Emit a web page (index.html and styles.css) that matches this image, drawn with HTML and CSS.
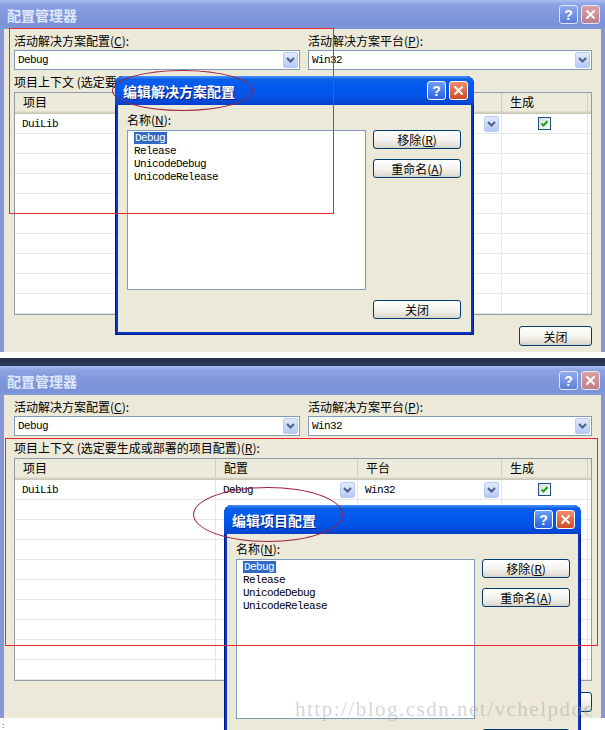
FILE: index.html
```html
<!DOCTYPE html>
<html lang="zh-CN">
<head>
    <meta charset="UTF-8">
    <title>配置管理器</title>
    <link rel="stylesheet" href="styles.css">
</head>
<body>
<div class="page">
    <!-- first capture -->
    <div class="window">
        <div class="titlebar">
            <span class="title">配置管理器</span>
            <span class="caption-btns">
                <span class="cbtn help">?</span>
                <span class="cbtn close"><svg width="11" height="11" viewBox="0 0 11 11"><path d="M1.5 1.5l8 8M9.5 1.5l-8 8" stroke="#fff" stroke-width="2"/></svg></span>
            </span>
        </div>
        <div class="client">
            <div class="fields">
                <div class="field">
                    <div class="label">活动解决方案配置(<u>C</u>):</div>
                    <div class="combo"><span class="mono">Debug</span><span class="drop"><svg width="9" height="6" viewBox="0 0 9 6"><path d="M1 1l3.5 3.5L8 1" stroke="#4d6185" stroke-width="2" fill="none"/></svg></span></div>
                </div>
                <div class="field">
                    <div class="label">活动解决方案平台(<u>P</u>):</div>
                    <div class="combo"><span class="mono">Win32</span><span class="drop"><svg width="9" height="6" viewBox="0 0 9 6"><path d="M1 1l3.5 3.5L8 1" stroke="#4d6185" stroke-width="2" fill="none"/></svg></span></div>
                </div>
            </div>
            <div class="label ctx">项目上下文 (选定要生成或部署的项目配置)(<u>R</u>):</div>
            <div class="grid">
                <div class="row head"><div>项目</div><div>配置</div><div>平台</div><div>生成</div><div></div></div>
                <div class="row">
                    <div class="cell mono">DuiLib</div>
                    <div class="cell pick"><span class="mono">Debug</span><span class="drop"><svg width="9" height="6" viewBox="0 0 9 6"><path d="M1 1l3.5 3.5L8 1" stroke="#4d6185" stroke-width="2" fill="none"/></svg></span></div>
                    <div class="cell pick"><span class="mono">Win32</span><span class="drop"><svg width="9" height="6" viewBox="0 0 9 6"><path d="M1 1l3.5 3.5L8 1" stroke="#4d6185" stroke-width="2" fill="none"/></svg></span></div>
                    <div class="cell check-cell"><span class="checkbox"><svg width="9" height="9" viewBox="0 0 9 9"><path d="M1.5 4.5l2 2L7.5 2" stroke="#21a121" stroke-width="2" fill="none"/></svg></span></div>
                    <div class="cell"></div>
                </div>
                <div class="row"><div class="cell"></div><div class="cell"></div><div class="cell"></div><div class="cell"></div><div class="cell"></div></div>
                <div class="row"><div class="cell"></div><div class="cell"></div><div class="cell"></div><div class="cell"></div><div class="cell"></div></div>
                <div class="row"><div class="cell"></div><div class="cell"></div><div class="cell"></div><div class="cell"></div><div class="cell"></div></div>
                <div class="row"><div class="cell"></div><div class="cell"></div><div class="cell"></div><div class="cell"></div><div class="cell"></div></div>
                <div class="row"><div class="cell"></div><div class="cell"></div><div class="cell"></div><div class="cell"></div><div class="cell"></div></div>
                <div class="row"><div class="cell"></div><div class="cell"></div><div class="cell"></div><div class="cell"></div><div class="cell"></div></div>
                <div class="row"><div class="cell"></div><div class="cell"></div><div class="cell"></div><div class="cell"></div><div class="cell"></div></div>
                <div class="row"><div class="cell"></div><div class="cell"></div><div class="cell"></div><div class="cell"></div><div class="cell"></div></div>
                <div class="row"><div class="cell"></div><div class="cell"></div><div class="cell"></div><div class="cell"></div><div class="cell"></div></div>
            </div>
            <div class="footer"><button class="btn wide">关闭</button></div>
        </div>
    </div>

    <div class="seam"></div>

    <!-- second capture -->
    <div class="window second">
        <div class="titlebar">
            <span class="title">配置管理器</span>
            <span class="caption-btns">
                <span class="cbtn help">?</span>
                <span class="cbtn close"><svg width="11" height="11" viewBox="0 0 11 11"><path d="M1.5 1.5l8 8M9.5 1.5l-8 8" stroke="#fff" stroke-width="2"/></svg></span>
            </span>
        </div>
        <div class="client">
            <div class="fields">
                <div class="field">
                    <div class="label">活动解决方案配置(<u>C</u>):</div>
                    <div class="combo"><span class="mono">Debug</span><span class="drop"><svg width="9" height="6" viewBox="0 0 9 6"><path d="M1 1l3.5 3.5L8 1" stroke="#4d6185" stroke-width="2" fill="none"/></svg></span></div>
                </div>
                <div class="field">
                    <div class="label">活动解决方案平台(<u>P</u>):</div>
                    <div class="combo"><span class="mono">Win32</span><span class="drop"><svg width="9" height="6" viewBox="0 0 9 6"><path d="M1 1l3.5 3.5L8 1" stroke="#4d6185" stroke-width="2" fill="none"/></svg></span></div>
                </div>
            </div>
            <div class="label ctx">项目上下文 (选定要生成或部署的项目配置)(<u>R</u>):</div>
            <div class="grid">
                <div class="row head"><div>项目</div><div>配置</div><div>平台</div><div>生成</div><div></div></div>
                <div class="row">
                    <div class="cell mono">DuiLib</div>
                    <div class="cell pick"><span class="mono">Debug</span><span class="drop"><svg width="9" height="6" viewBox="0 0 9 6"><path d="M1 1l3.5 3.5L8 1" stroke="#4d6185" stroke-width="2" fill="none"/></svg></span></div>
                    <div class="cell pick"><span class="mono">Win32</span><span class="drop"><svg width="9" height="6" viewBox="0 0 9 6"><path d="M1 1l3.5 3.5L8 1" stroke="#4d6185" stroke-width="2" fill="none"/></svg></span></div>
                    <div class="cell check-cell"><span class="checkbox"><svg width="9" height="9" viewBox="0 0 9 9"><path d="M1.5 4.5l2 2L7.5 2" stroke="#21a121" stroke-width="2" fill="none"/></svg></span></div>
                    <div class="cell"></div>
                </div>
                <div class="row"><div class="cell"></div><div class="cell"></div><div class="cell"></div><div class="cell"></div><div class="cell"></div></div>
                <div class="row"><div class="cell"></div><div class="cell"></div><div class="cell"></div><div class="cell"></div><div class="cell"></div></div>
                <div class="row"><div class="cell"></div><div class="cell"></div><div class="cell"></div><div class="cell"></div><div class="cell"></div></div>
                <div class="row"><div class="cell"></div><div class="cell"></div><div class="cell"></div><div class="cell"></div><div class="cell"></div></div>
                <div class="row"><div class="cell"></div><div class="cell"></div><div class="cell"></div><div class="cell"></div><div class="cell"></div></div>
                <div class="row"><div class="cell"></div><div class="cell"></div><div class="cell"></div><div class="cell"></div><div class="cell"></div></div>
                <div class="row"><div class="cell"></div><div class="cell"></div><div class="cell"></div><div class="cell"></div><div class="cell"></div></div>
                <div class="row"><div class="cell"></div><div class="cell"></div><div class="cell"></div><div class="cell"></div><div class="cell"></div></div>
                <div class="row"><div class="cell"></div><div class="cell"></div><div class="cell"></div><div class="cell"></div><div class="cell"></div></div>
            </div>
            <div class="footer"><button class="btn wide">关闭</button></div>
        </div>
    </div>
    <div class="tail">:</div>

    <!-- modal dialogs on top of each capture -->
    <div class="dialog dlg-solution">
        <div class="titlebar active">
            <span class="title">编辑解决方案配置</span>
            <span class="caption-btns">
                <span class="cbtn help">?</span>
                <span class="cbtn close"><svg width="11" height="11" viewBox="0 0 11 11"><path d="M1.5 1.5l8 8M9.5 1.5l-8 8" stroke="#fff" stroke-width="2"/></svg></span>
            </span>
        </div>
        <div class="dialog-body">
            <div class="label">名称(<u>N</u>):</div>
            <div></div>
            <div class="listbox mono">
                <div><span class="sel">Debug</span></div>
                <div>Release</div>
                <div>UnicodeDebug</div>
                <div>UnicodeRelease</div>
            </div>
            <div class="side">
                <button class="btn">移除(<u>R</u>)</button>
                <button class="btn">重命名(<u>A</u>)</button>
                <button class="btn last">关闭</button>
            </div>
        </div>
    </div>

    <div class="dialog dlg-project">
        <div class="titlebar active">
            <span class="title">编辑项目配置</span>
            <span class="caption-btns">
                <span class="cbtn help">?</span>
                <span class="cbtn close"><svg width="11" height="11" viewBox="0 0 11 11"><path d="M1.5 1.5l8 8M9.5 1.5l-8 8" stroke="#fff" stroke-width="2"/></svg></span>
            </span>
        </div>
        <div class="dialog-body">
            <div class="label">名称(<u>N</u>):</div>
            <div></div>
            <div class="listbox mono">
                <div><span class="sel">Debug</span></div>
                <div>Release</div>
                <div>UnicodeDebug</div>
                <div>UnicodeRelease</div>
            </div>
            <div class="side">
                <button class="btn">移除(<u>R</u>)</button>
                <button class="btn">重命名(<u>A</u>)</button>
                <button class="btn last">关闭</button>
            </div>
        </div>
    </div>

    <!-- red annotation marks -->
    <div class="mark-rect rect-a"></div>
    <div class="mark-oval oval-a"></div>
    <div class="mark-rect rect-b"></div>
    <div class="mark-oval oval-b"></div>

    <div class="watermark">http://blog.csdn.net/vchelpdoc</div>
</div>
</body>
</html>
```

FILE: styles.css
```css
* {
    box-sizing: border-box;
}
body {
    margin: 0;
    background: #fff;
    font-family: "Noto Sans CJK SC", "Liberation Sans", sans-serif;
    font-size: 12px;
    color: #000;
}
.page {
    position: relative;
    width: 605px;
    height: 730px;
    overflow: hidden;
}
.mono {
    font-family: "Liberation Mono", "Noto Sans CJK SC", monospace;
    font-size: 11px;
    letter-spacing: -0.6px;
}

/* main window */
.window {
    background: #8696d8;
}
.titlebar {
    height: 29px;
    display: flex;
    align-items: center;
    justify-content: space-between;
    padding: 0 5px 0 7px;
    background: linear-gradient(#a9bdee 0%, #8ca4e4 14%, #7f97db 50%, #7a93d8 85%, #8299da 100%);
}
.second .titlebar {
    height: 33px;
    padding-top: 4px;
    background: linear-gradient(#2b3554 0%, #2b3554 12%, #a9bdee 13%, #8ca4e4 24%, #7f97db 55%, #7a93d8 88%, #8299da 100%);
}
.title {
    font-size: 14px;
    font-weight: bold;
    line-height: 16px;
    color: #dfe7f9;
    white-space: nowrap;
}
.caption-btns {
    display: flex;
    gap: 3px;
}
.cbtn {
    width: 19px;
    height: 19px;
    border: 1px solid #dfe6f8;
    border-radius: 3px;
    display: flex;
    align-items: center;
    justify-content: center;
    color: #fff;
    font: bold 14px "Liberation Sans", sans-serif;
}
.help {
    background: linear-gradient(#8eabec, #5d80d6);
}
.close {
    background: linear-gradient(#dba2a6, #bf7e89);
}
.active .title {
    color: #fff;
    text-shadow: 1px 1px 0 #0a1c80;
}
.active .cbtn {
    border-color: #fff;
}
.active .help {
    background: linear-gradient(#6d9ff7, #2a62de);
}
.active .close {
    background: linear-gradient(#f0906f, #cf4a25);
}

.client {
    margin: 0 4px 3px;
    background: #ece9d8;
    padding: 5px 9px 6px 10px;
}
.fields {
    display: grid;
    grid-template-columns: 286px 1fr;
    column-gap: 8px;
}
.label {
    height: 14px;
    line-height: 14px;
    white-space: nowrap;
}
.field .label {
    margin-bottom: 2px;
}
.combo {
    height: 20px;
    border: 1px solid #7f9db9;
    background: #fff;
    display: flex;
    align-items: center;
    justify-content: space-between;
    padding-left: 3px;
}
.drop {
    width: 15px;
    height: 16px;
    margin-right: 1px;
    border: 1px solid #b9cbf3;
    border-radius: 2px;
    background: linear-gradient(#e1e9fd, #b6c9f6);
    display: flex;
    align-items: center;
    justify-content: center;
}
.ctx {
    margin-top: 5px;
}

/* project grid */
.grid {
    margin-top: 3px;
    height: 223px;
    border: 1px solid #8e9ba8;
    background: #fff;
    overflow: hidden;
}
.row {
    display: grid;
    grid-template-columns: 201px 142px 144px 86px 1fr;
    height: 20px;
    border-bottom: 1px solid #e6e6e6;
}
.head {
    height: 21px;
    border-bottom: none;
    background: #ebeadb;
    box-shadow: inset 0 -1px #cbc7b8, inset 0 -2px #d6d2c2, inset 0 -3px #e2decd;
}
.head div {
    padding-left: 8px;
    line-height: 18px;
    border-right: 1px solid #d3d0c0;
}
.head div:last-child {
    border-right: none;
}
.cell {
    display: flex;
    align-items: center;
    padding-left: 7px;
    border-right: 1px solid #e6e6e6;
}
.cell:last-child {
    border-right: none;
}
.pick {
    justify-content: space-between;
    padding-right: 1px;
}
.check-cell {
    justify-content: center;
    padding-left: 0;
}
.checkbox {
    width: 13px;
    height: 13px;
    border: 1px solid #1c5180;
    background: linear-gradient(135deg, #dcdbd5, #fff);
    display: flex;
    align-items: center;
    justify-content: center;
}

.footer {
    margin-top: 11px;
    display: flex;
    justify-content: flex-end;
}
.btn {
    height: 19px;
    padding: 0;
    border: 1px solid #003c74;
    border-radius: 3px;
    background: linear-gradient(#fff 0%, #f4f4f0 50%, #e3e0d6 85%, #d6d0c5 100%);
    font-family: "Noto Sans CJK SC", sans-serif;
    font-size: 12px;
    line-height: 17px;
    color: #000;
}
.wide {
    width: 73px;
    height: 20px;
}

.seam {
    height: 7px;
    border-top: 3px solid #fff;
    background: #28324f;
}
.tail {
    padding-left: 2px;
    font-size: 8px;
    line-height: 8px;
    color: #555;
}

/* modal dialogs */
.dialog {
    position: absolute;
    background: #0a35c0;
    border-radius: 8px 8px 0 0;
    overflow: hidden;
    box-shadow: inset 0 0 0 1px #001a90;
}
.dlg-solution {
    left: 115px;
    top: 76px;
    width: 359px;
    height: 259px;
}
.dlg-project {
    left: 224px;
    top: 505px;
    width: 357px;
    height: 260px;
}
.dialog .titlebar {
    height: 29px;
    padding: 0 6px 0 8px;
    background: linear-gradient(#4a94fb 0%, #0b5fe9 12%, #0058ee 40%, #0454e6 70%, #0340cb 100%);
}
.dialog-body {
    margin: 0 3px 3px;
    background: #ece9d8;
    padding: 8px 9px 13px;
    display: grid;
    grid-template-columns: 239px 88px;
    grid-template-rows: 14px 189px;
    column-gap: 7px;
    row-gap: 3px;
}
.listbox {
    height: 160px;
    border: 1px solid #7f9db9;
    background: #fff;
    padding: 1px 6px;
    line-height: 13px;
}
.sel {
    background: #316ac5;
    color: #fff;
    padding: 0 2px 0 1px;
}
.side {
    display: flex;
    flex-direction: column;
    gap: 10px;
}
.side .last {
    margin-top: auto;
}

/* red annotation marks */
.mark-rect {
    position: absolute;
    border: 1px solid #e8262e;
}
.rect-a {
    left: 9px;
    top: 28px;
    width: 325px;
    height: 186px;
}
.rect-b {
    left: 5px;
    top: 438px;
    width: 593px;
    height: 208px;
}
.mark-oval {
    position: absolute;
    border: 1px solid #a2203a;
    border-radius: 50%;
}
.oval-a {
    left: 112px;
    top: 70px;
    width: 141px;
    height: 41px;
}
.oval-b {
    left: 193px;
    top: 487px;
    width: 150px;
    height: 55px;
}

.watermark {
    position: absolute;
    left: 295px;
    top: 697px;
    font-family: "Liberation Serif", serif;
    font-size: 21px;
    letter-spacing: 1.5px;
    color: rgba(160, 160, 160, 0.45);
    white-space: nowrap;
}
```
